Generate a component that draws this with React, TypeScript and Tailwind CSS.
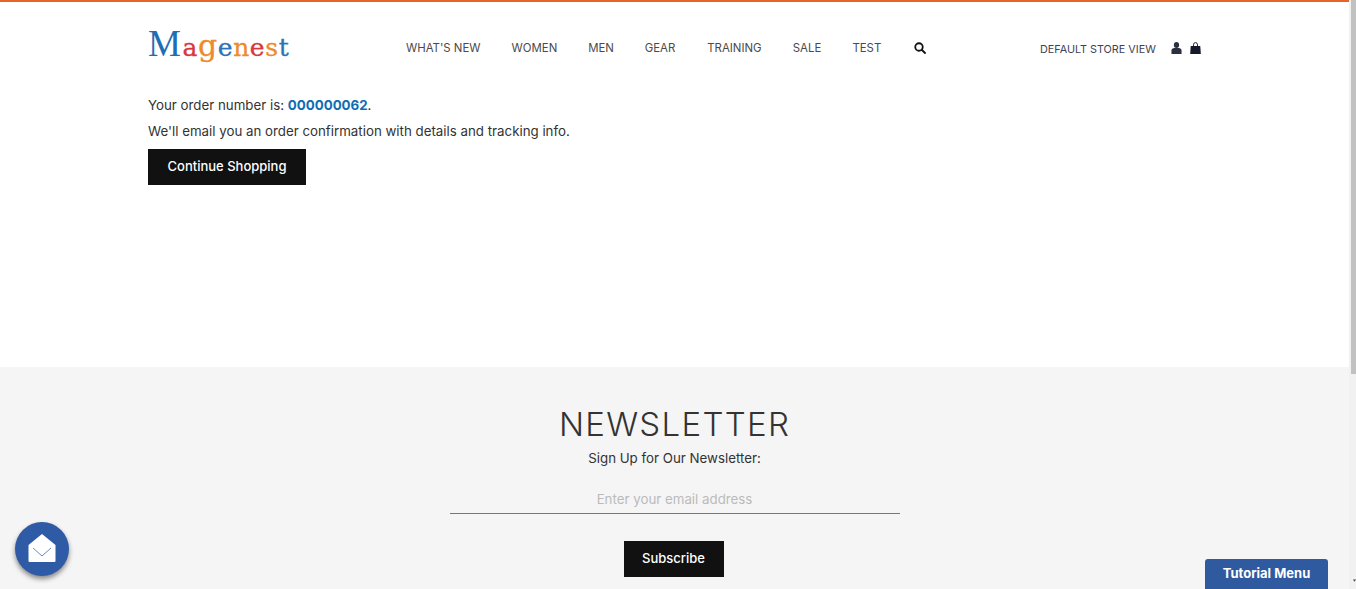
import React from "react";

const nav: [string, string][] = [
  ["WHAT'S NEW", "w-[75px]"],
  ["WOMEN", "w-[46px]"],
  ["MEN", "w-[26px]"],
  ["GEAR", "w-[32px]"],
  ["TRAINING", "w-[55px]"],
  ["SALE", "w-[29px]"],
  ["TEST", "w-[28px]"],
];

function Logo() {
  return (
    <div className="w-[143px] h-[40px] leading-[38px] whitespace-nowrap">
      <span className="text-[37px] text-[#1f6db5] tracking-[1.5px] font-['Liberation_Serif',serif]">M</span>
      <span className="text-[25px] tracking-[0.6px] [-webkit-text-stroke:0.3px_currentColor] font-['DejaVu_Serif',serif]">
        <span className="text-[#d9363e]">a</span>
        <span className="text-[30px] text-[#ee8a2e]">g</span>
        <span className="text-[#2a73b8]">e</span>
        <span className="text-[#ee8a2e]">n</span>
        <span className="text-[#d9363e]">e</span>
        <span className="text-[#ee8a2e]">s</span>
        <span className="text-[#2a73b8]">t</span>
      </span>
    </div>
  );
}

export default function App() {
  return (
    <div className="flex h-[589px] w-[1356px] overflow-hidden bg-white font-['Inter',sans-serif] relative">
      <div className="w-[1349px] shrink-0 flex flex-col">
        <div className="h-[2px] bg-[#e8622a]" />
        <header className="h-[73px] pl-[148px] flex items-start">
          <div className="mt-[23px] w-[258px] shrink-0"><Logo /></div>
          <nav className="w-[520px] shrink-0 flex justify-between items-center mt-[40px] h-[14px] text-[11.4px] text-[#4a4a4a]">
            {nav.map(([n, w]) => (
              <span key={n} className={`${w} whitespace-nowrap`}>{n}</span>
            ))}
            <svg viewBox="0 0 24 24" className="w-[12px] h-[12px] ml-[3px] mt-[-3px]" fill="none" stroke="#111" strokeWidth="3.6">
              <circle cx="10" cy="10" r="7.5" />
              <path d="M15.5 15.5 22 22" strokeLinecap="round" />
            </svg>
          </nav>
          <div className="ml-[114px] mt-[41px] flex items-center text-[10.8px] leading-[14px] text-[#3d4356] whitespace-nowrap">
            <span className="w-[115px]">DEFAULT STORE VIEW</span>
            <svg viewBox="0 0 12 12" className="w-[11px] h-[12px] ml-[16px] mt-[-4px]" fill="#2b3040" preserveAspectRatio="none">
              <circle cx="6" cy="3" r="2.9" />
              <path d="M.5 12V8.500C.5 7 2 6 3.500 6h5C10 6 11.500 7 11.500 8.500V12z" />
            </svg>
            <svg viewBox="0 0 12 12" className="w-[11px] h-[12px] ml-[8px] mt-[-4px]" fill="#15192b" preserveAspectRatio="none">
              <path d="M.8 4h10.400l.6 8H.2z" />
              <path d="M3.800 5V2.800a2.200 2.200 0 0 1 4.400 0V5" fill="none" stroke="#15192b" strokeWidth="1" />
            </svg>
          </div>
        </header>
        <main className="h-[292px] pl-[148px] pt-[20px] text-[13.3px] text-[#333]">
          <p className="leading-[20px] whitespace-nowrap">
            Your order number is: <span className="font-bold text-[#0f6cb3]">000000062</span>.
          </p>
          <p className="leading-[20px] mt-[6px] whitespace-nowrap">We'll email you an order confirmation with details and tracking info.</p>
          <button className="mt-[8px] w-[158px] h-[36px] pb-[1px] bg-[#111] text-white text-[13px] font-medium">Continue Shopping</button>
        </main>
        <footer className="flex-1 bg-[#f5f5f5] flex flex-col items-center">
          <h2 className="mt-[38px] text-[33px] leading-[38px] font-light text-[#333] tracking-[1.3px] whitespace-nowrap">NEWSLETTER</h2>
          <p className="mt-[5px] text-[13.3px] leading-[20px] text-[#333]">Sign Up for Our Newsletter:</p>
          <div className="mt-[21px] w-[450px] h-[25px] border-b border-[#777] text-center text-[13.3px] leading-[20px] text-[#bbb]">Enter your email address</div>
          <button className="mt-[27px] mr-[2px] w-[100px] h-[36px] pb-[1px] bg-[#111] text-white text-[13px] font-medium">Subscribe</button>
        </footer>
      </div>
      <div className="w-[2px] bg-[#f1f1f1]" />
      <div className="w-[5px] flex flex-col">
        <div className="h-[374px] bg-[#c1c1c1]" />
        <div className="flex-1 bg-[#f1f1f1]" />
      </div>
      <div className="absolute left-[15px] top-[522px] w-[54px] h-[54px] rounded-full bg-[#2f5aa5] shadow-[0_3px_5px_rgba(0,0,0,0.45)] flex items-center justify-center">
        <svg viewBox="0 0 28 30" className="w-[28px] h-[30px] mt-[-2px]">
          <path d="M14 1 27.500 12V28a1 1 0 0 1-1 1H1.500a1 1 0 0 1-1-1V12z" fill="#fff" />
          <path d="M5 15l9 8 9-8" fill="none" stroke="#6b8cc4" strokeWidth="1" />
        </svg>
      </div>
      <div className="absolute left-[1205px] top-[559px] w-[123px] h-[30px] rounded-t-[3px] bg-[#2f5aa0] text-white text-[13px] font-bold leading-[29px] text-center">Tutorial Menu</div>
      <svg viewBox="0 0 4 3" className="absolute left-[1353px] top-[579px] w-[3px] h-[3px]">
        <path d="M0 0h4L2 3z" fill="#444" />
      </svg>
    </div>
  );
}
